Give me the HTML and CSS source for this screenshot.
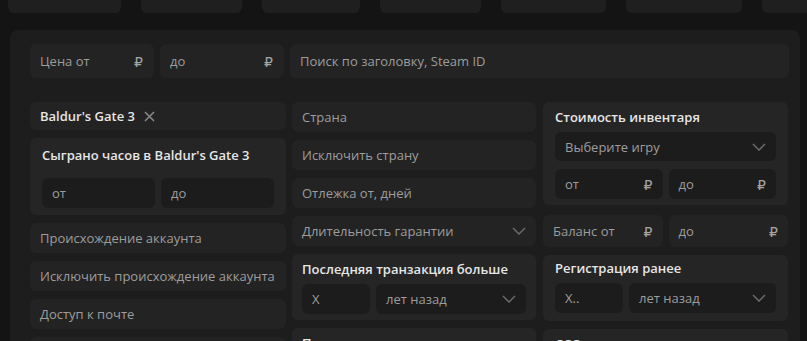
FILE: index.html
```html
<!DOCTYPE html>
<html lang="ru">
<head>
<meta charset="utf-8">
<link rel="stylesheet" href="styles.css">
</head>
<body>
<div class="tabs">
  <div class="tab t1"></div>
  <div class="tab t2"></div>
  <div class="tab t3"></div>
  <div class="tab t4"></div>
  <div class="tab t5"></div>
  <div class="tab t6"></div>
  <div class="tab t7"></div>
</div>
<div class="panel">
  <div class="top-row">
    <div class="field price"><span>Цена от</span><span class="cur">₽</span></div>
    <div class="field price"><span>до</span><span class="cur">₽</span></div>
    <div class="field search">Поиск по заголовку, Steam ID</div>
  </div>
  <div class="grid">
    <div class="col">
      <div class="field chip"><span class="chip-name">Baldur's Gate 3</span>
        <svg class="x" width="11" height="11" viewBox="0 0 11 11"><path d="M1 1L10 10M10 1L1 10" stroke="#8a8a8a" stroke-width="1.5" fill="none"/></svg>
      </div>
      <div class="card hours">
        <div class="card-title">Сыграно часов в Baldur's Gate 3</div>
        <div class="pair">
          <div class="inp">от</div>
          <div class="inp">до</div>
        </div>
      </div>
      <div class="field">Происхождение аккаунта</div>
      <div class="field">Исключить происхождение аккаунта</div>
      <div class="field">Доступ к почте</div>
      <div class="field"></div>
    </div>
    <div class="col">
      <div class="field">Страна</div>
      <div class="field">Исключить страну</div>
      <div class="field">Отлежка от, дней</div>
      <div class="field select"><span>Длительность гарантии</span>
        <svg class="chev" width="14" height="8" viewBox="0 0 14 8"><path d="M1 1L7 7L13 1" stroke="#6e6e6e" stroke-width="1.4" fill="none"/></svg>
      </div>
      <div class="card mid">
        <div class="card-title">Последняя транзакция больше</div>
        <div class="pair ago">
          <div class="inp small">X</div>
          <div class="inp select"><span>лет назад</span>
            <svg class="chev" width="14" height="8" viewBox="0 0 14 8"><path d="M1 1L7 7L13 1" stroke="#6e6e6e" stroke-width="1.4" fill="none"/></svg>
          </div>
        </div>
      </div>
      <div class="card mid">
        <div class="card-title">Последняя транзакция на</div>
      </div>
    </div>
    <div class="col">
      <div class="card inv">
        <div class="card-title">Стоимость инвентаря</div>
        <div class="inp select wide"><span>Выберите игру</span>
          <svg class="chev" width="14" height="8" viewBox="0 0 14 8"><path d="M1 1L7 7L13 1" stroke="#6e6e6e" stroke-width="1.4" fill="none"/></svg>
        </div>
        <div class="pair">
          <div class="inp price"><span>от</span><span class="cur">₽</span></div>
          <div class="inp price"><span>до</span><span class="cur">₽</span></div>
        </div>
      </div>
      <div class="pair balance">
        <div class="field price"><span>Баланс от</span><span class="cur">₽</span></div>
        <div class="field price"><span>до</span><span class="cur">₽</span></div>
      </div>
      <div class="card reg">
        <div class="card-title">Регистрация ранее</div>
        <div class="pair ago">
          <div class="inp small">X..</div>
          <div class="inp select"><span>лет назад</span>
            <svg class="chev" width="14" height="8" viewBox="0 0 14 8"><path d="M1 1L7 7L13 1" stroke="#6e6e6e" stroke-width="1.4" fill="none"/></svg>
          </div>
        </div>
      </div>
      <div class="card">
        <div class="card-title">ССС</div>
      </div>
    </div>
  </div>
</div>
</body>
</html>
```
FILE: styles.css
```css
* { box-sizing: border-box; }
html, body { margin: 0; padding: 0; }
body {
  background: #141414;
  font-family: "Open Sans", "DejaVu Sans", sans-serif;
  font-size: 13px;
  color: #9d9d9d;
  width: 807px;
  height: 341px;
  overflow: hidden;
}
.tabs {
  display: flex;
  gap: 20px;
  height: 13px;
  padding-left: 8px;
}
.tab {
  height: 13px;
  background: #1f1f1f;
  border-radius: 0 0 6px 6px;
  flex: none;
}
.t1 { width: 113px; }
.t2 { width: 101px; }
.t3 { width: 98px; }
.t4 { width: 101px; }
.t5 { width: 105px; }
.t6 { width: 116px; }
.t7 { width: 60px; }
.panel {
  margin: 17px 0 0 10px;
  width: 790px;
  height: 400px;
  background: #1d1d1d;
  border-radius: 8px 8px 0 0;
  padding: 14px 11px 0 20px;
}
.top-row {
  display: flex;
  gap: 6px;
  height: 34px;
}
.field {
  background: #232323;
  border-radius: 6px;
  height: 30px;
  display: flex;
  align-items: center;
  padding: 0 10px;
  white-space: nowrap;
  flex: none;
}
.top-row .field { height: 34px; }
.top-row .price { width: 124px; padding-right: 11px; }
.top-row .search { flex: 1; }
.price { justify-content: space-between; }
.cur { color: #a5a5a5; font-size: 14px; }
.grid {
  display: grid;
  grid-template-columns: 256px 244px 246px;
  column-gap: 6px;
  margin-top: 24px;
  align-items: start;
}
.grid > .col:last-child { margin-left: 1px; }
.col {
  display: flex;
  flex-direction: column;
  gap: 8px;
}
.chip { height: 28px; gap: 9px; }
.chip-name { color: #e6e6e6; font-weight: 600; }
.x { display: block; }
.select { justify-content: space-between; }
.chev { display: block; }
.card {
  background: #252525;
  border-radius: 6px;
  padding: 6px 12px 6px 12px;
}
.card.mid { padding-left: 10px; padding-right: 10px; }
.card-title {
  color: #e6e6e6;
  font-weight: 600;
  line-height: 18px;
  margin-bottom: 6px;
}
.hours { padding-bottom: 7px; }
.hours .card-title { margin: 2px 0 14px; }
.reg { padding-top: 4px; padding-bottom: 8px; }
.pair {
  display: flex;
  gap: 6px;
}
.inp {
  background: #1c1c1c;
  border-radius: 6px;
  height: 30px;
  display: flex;
  align-items: center;
  padding: 0 10px;
  flex: 1;
  white-space: nowrap;
}
.inp.small { flex: none; width: 68px; }
.inp.wide { margin-bottom: 8px; height: 29px; }
.balance .field { flex: 1; height: 32px; }
.balance { margin-top: 2px; }
```
